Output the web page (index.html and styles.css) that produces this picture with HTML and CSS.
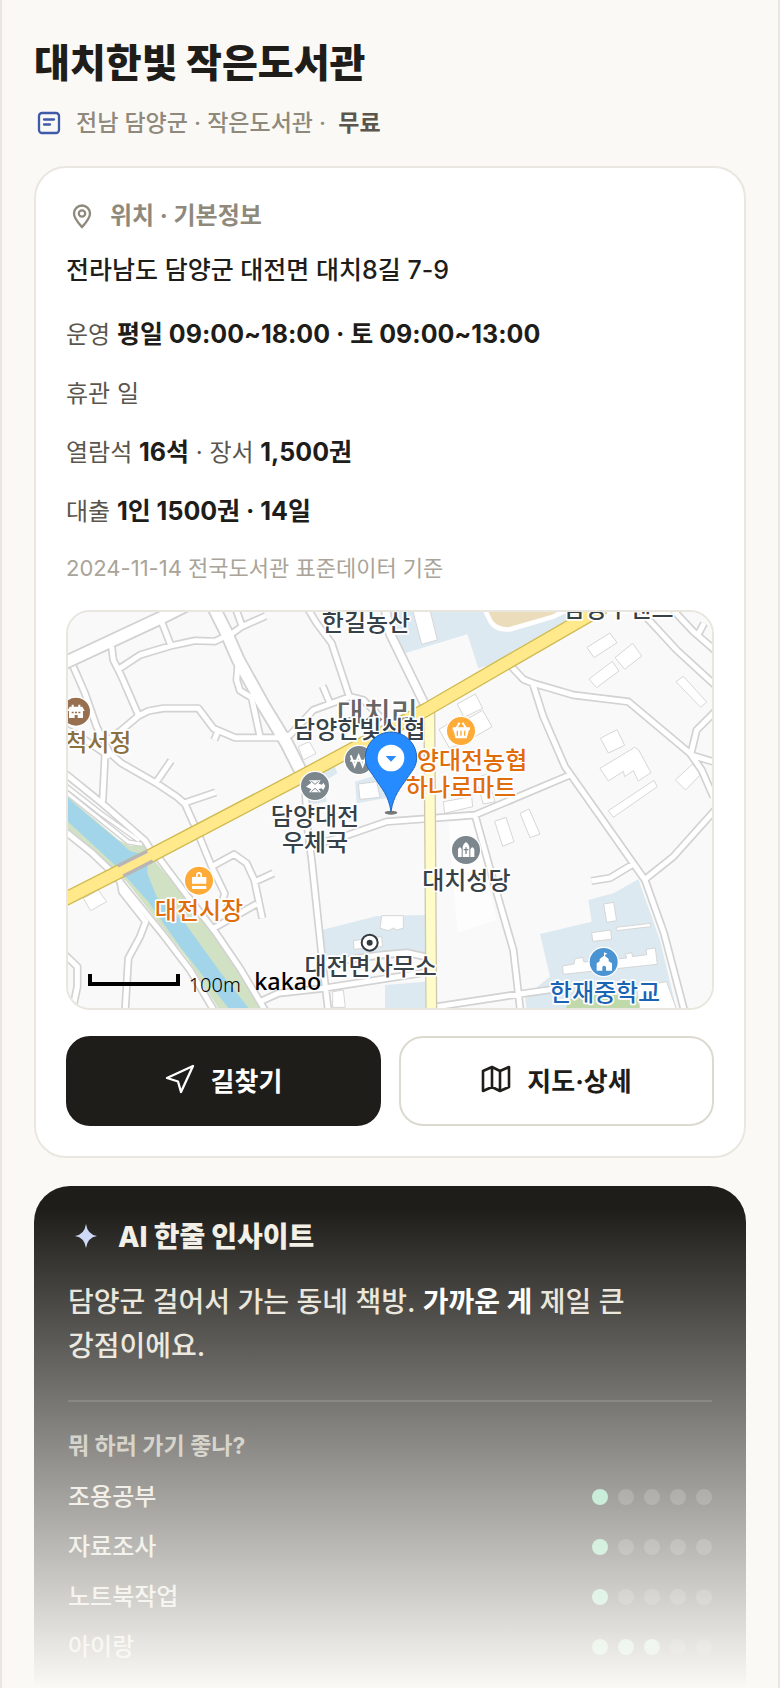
FILE: index.html
```
<!DOCTYPE html>
<html lang="ko">
<head>
    <meta charset="UTF-8">
    <meta name="viewport" content="width=device-width, initial-scale=1.0">
    <title>대치한빛 작은도서관</title>
    <link rel="stylesheet" href="styles.css">
</head>
<body>
    <main class="page">
        <header class="head">
            <h1>대치한빛 작은도서관</h1>
            <p class="sub">
                <svg class="icon" viewBox="0 0 30 30" fill="none" stroke="#3f5aa8" stroke-width="2.300" stroke-linecap="round"><rect x="5" y="5" width="20" height="20" rx="3"/><path d="M10 11.500h10M10 16.500h6"/></svg>
                <span>전남 담양군 · 작은도서관 ·&nbsp; <b>무료</b></span>
            </p>
        </header>

        <!-- 위치, 기본정보 -->
        <section class="card">
            <h2>
                <svg class="icon" viewBox="0 0 30 30" fill="none" stroke="#8f897c" stroke-width="2.300"><path d="M16 26C12 21.500 8 17.500 8 12.500a8 8 0 0 1 16 0C24 17.500 20 21.500 16 26z"/><circle cx="16" cy="12.500" r="3.200"/></svg>
                위치 · 기본정보
            </h2>
            <p class="addr">전라남도 담양군 대전면 대치8길 7-9</p>
            <ul class="info">
                <li>운영 <b>평일 09:00~18:00 · 토 09:00~13:00</b></li>
                <li>휴관 일</li>
                <li>열람석 <b>16석</b> · 장서 <b>1,500권</b></li>
                <li>대출 <b>1인 1500권 · 14일</b></li>
            </ul>
            <p class="note">2024-11-14 전국도서관 표준데이터 기준</p>

            <div class="map">
                <svg viewBox="24 36 1932 1188" preserveAspectRatio="xMidYMid slice">
                    <rect width="2000" height="1300" fill="#f9f9f9"/>
                    <!-- 학교, 관공서 부지 -->
                    <g fill="#dde9f1">
                        <path d="M985 30H1570L1350 180L1255 205L1222 103L1035 160L1000 100z"/>
                        <path d="M1440 1002L1595 965L1585 900L1660 880L1735 838L1800 1020L1850 1230H1400L1395 1190L1470 1130z"/>
                        <path d="M785 990L950 948L1095 945V1065L790 1100zM975 1155L1095 1145V1230H975z"/>
                        <path d="M885 545L1000 510V590L890 610zM770 520L825 500L832 520L790 545zM745 580L795 570L800 605L745 615z"/>
                    </g>
                    <path d="M1165 665L1240 655L1310 960L1193 998z" fill="#fdfdfd"/>
                    <path d="M1270 20L1292 65Q1310 92 1350 88L1480 50L1540 20z" fill="#ebdcbc" stroke="#fff" stroke-width="14"/>
                    <!-- 하천 -->
                    <path d="M24 590L175 719L212 738L262 733L290 790L375 890L465 1005L600 1215L605 1230H478L385 1080L200 845L160 808L100 748L24 688z" fill="#d0e2c3"/>
                    <path d="M24 593L75 638L175 722L210 753L235 760L262 752V820L290 890L375 970L480 1115L570 1230H510L360 1040L265 905L172 802L100 735L24 665z" fill="#a2d5ea"/>
                    <path d="M1515 1230L1530 1198Q1640 1170 1750 1195V1230z" fill="#c0d9ab"/>
                    <!-- 건물 -->
                    <g fill="#fff" stroke="#d6d6d6" stroke-width="3">
                        <path d="M1055 20L1105 10L1132 120L1085 133z"/>
                        <path d="M1581 142L1650 99L1671 128L1602 173zM1665 173L1718 130L1745 168L1694 208zM1587 237L1657 184L1677 213L1610 263zM1848 245L1870 229L1940 306L1922 322z"/>
                        <path d="M1192 312L1246 282L1268 325L1212 352zM1225 355L1268 331L1296 380L1245 410zM1137 388L1180 362L1212 430L1168 444z"/>
                        <path d="M1621 415L1671 389L1694 436L1645 459zM1620 505L1724 442L1736 450L1773 518L1735 543L1720 512L1694 530L1690 514L1645 543zM1645 632L1782 541L1792 560L1660 652zM1846 540L1898 492L1922 523L1877 570z"/>
                        <path d="M1150 605L1235 590L1238 620L1154 640zM1247 535L1280 522L1305 605L1270 612zM1380 640L1407 627L1440 702L1410 713zM1304 664L1338 652L1362 725L1328 739z"/>
                        <path d="M1595 998L1652 990L1655 1018L1598 1024zM1631 912L1661 907L1670 962L1640 967zM1668 982L1772 970V980L1670 992zM1507 1098L1542 1092L1545 1076L1568 1072L1572 1086L1700 1074L1696 1062L1715 1058L1718 1070L1760 1064L1758 1048L1786 1044L1792 1093L1510 1123z"/>
                        <path d="M965 947H1030V985L1010 990L1000 984L985 992L960 985zM880 1022L965 1010L968 1040L882 1048zM818 1175L850 1170L856 1222H818zM1730 1160L1820 1145L1850 1230H1740z"/>
                        <path d="M895 552L950 545L960 592L900 598zM70 895L115 870L140 905L92 932zM730 480L768 460L748 425L715 440z"/>
                    </g>
                    <!-- 골목길 : 테두리 먼저, 그 위에 흰 길 -->
                    <g fill="none" stroke="#d2d2d2" stroke-width="25" stroke-linejoin="round">
                        <path id="thin" stroke-width="17" d="M10 552L125 642L238 722M10 570L110 650L205 726L245 733"/>
                        <path id="lane" d="M40 200L75 280L110 380L150 460L185 490L290 550L350 590L375 612L410 690L455 800L494 880L484 915M155 140L160 180L185 230L235 345M175 208L240 165L330 138L405 122L465 124L505 105M303 60L332 135M130 430L185 390L235 348L265 333L310 325H415L460 385L525 413H655L690 405L760 330L870 290L910 300L960 350M535 180L530 240L540 272L575 293L600 410M510 105L545 80L617 48M525 20L545 75M740 20L770 70L815 130L868 290M788 258L808 305M463 420L475 390M333 482L290 545M370 610L467 577M135 465L128 605M0 508L130 613L255 722L285 770M0 380L60 410L150 470M0 682L95 758L160 820L210 882L310 1005L390 1110L467 1240M180 840L186 875L257 965L240 1010L205 1075L195 1240M290 765L380 885L465 995L540 1105L600 1205L620 1240M455 800L522 763L560 790L583 840L607 955M585 845L640 820M460 985L590 912M0 1050L52 1100V1160L35 1240M735 560L742 680L755 780L790 1110L806 1240M760 735L850 710L980 665L1245 645L1530 525M600 1205L655 1180L790 1165L1110 1115M790 1090L960 1065L1040 1058L1105 1072M1345 190L1390 238L1420 250L1540 285L1705 305L1890 460L1925 510L1960 590M1418 250L1450 350L1515 500L1755 840L1812 1000L1875 1240M1245 645L1305 860L1360 1050L1382 1240M1130 1220L1380 1182L1480 1168M1730 20L1850 150L1970 260M1830 20L1900 95L1970 155M1912 108L1932 70M1970 330L1910 390L1893 460M1893 465L1970 488M1755 838L1840 770L1970 625M1594 843L1650 834L1715 795"/>
                        <path stroke-width="32" d="M975 20L990 100L1095 315"/>
                        <path stroke-width="44" d="M0 195L300 55L380 15M460 20L500 100L535 180L610 315L680 430L728 525"/>
                    </g>
                    <g fill="none" stroke="#fff" stroke-width="15" stroke-linejoin="round">
                        <path stroke-width="9" d="M10 552L125 642L238 722M10 570L110 650L205 726L245 733"/>
                        <path d="M40 200L75 280L110 380L150 460L185 490L290 550L350 590L375 612L410 690L455 800L494 880L484 915M155 140L160 180L185 230L235 345M175 208L240 165L330 138L405 122L465 124L505 105M303 60L332 135M130 430L185 390L235 348L265 333L310 325H415L460 385L525 413H655L690 405L760 330L870 290L910 300L960 350M535 180L530 240L540 272L575 293L600 410M510 105L545 80L617 48M525 20L545 75M740 20L770 70L815 130L868 290M788 258L808 305M463 420L475 390M333 482L290 545M370 610L467 577M135 465L128 605M0 508L130 613L255 722L285 770M0 380L60 410L150 470M0 682L95 758L160 820L210 882L310 1005L390 1110L467 1240M180 840L186 875L257 965L240 1010L205 1075L195 1240M290 765L380 885L465 995L540 1105L600 1205L620 1240M455 800L522 763L560 790L583 840L607 955M585 845L640 820M460 985L590 912M0 1050L52 1100V1160L35 1240M735 560L742 680L755 780L790 1110L806 1240M760 735L850 710L980 665L1245 645L1530 525M600 1205L655 1180L790 1165L1110 1115M790 1090L960 1065L1040 1058L1105 1072M1345 190L1390 238L1420 250L1540 285L1705 305L1890 460L1925 510L1960 590M1418 250L1450 350L1515 500L1755 840L1812 1000L1875 1240M1245 645L1305 860L1360 1050L1382 1240M1130 1220L1380 1182L1480 1168M1730 20L1850 150L1970 260M1830 20L1900 95L1970 155M1912 108L1932 70M1970 330L1910 390L1893 460M1893 465L1970 488M1755 838L1840 770L1970 625M1594 843L1650 834L1715 795"/>
                        <path stroke-width="22" d="M975 20L990 100L1095 315"/>
                        <path stroke-width="33" d="M0 195L300 55L380 15M460 20L500 100L535 180L610 315L680 430L728 525"/>
                    </g>
                    <!-- 큰길 -->
                    <g fill="none">
                        <path d="M1108 325L1114 1240" stroke="#cfc8b0" stroke-width="36"/>
                        <path d="M1108 325L1114 1240" stroke="#fffcc9" stroke-width="28"/>
                        <path d="M0 905L270 768L730 527L1100 328L1350 183L1650 10" stroke="#d0bb53" stroke-width="43"/>
                        <path d="M0 905L270 768L730 527L1100 328L1350 183L1650 10" stroke="#ffe98b" stroke-width="35"/>
                        <path d="M173 798L262 754M190 828L278 783" stroke="#b9b5b5" stroke-width="10"/>
                    </g>
                    <!-- 장소 아이콘 -->
                    <g stroke="#fff" stroke-width="4">
                        <circle cx="48" cy="335" r="44" fill="#99704f"/>
                        <circle cx="417" cy="842" r="44" fill="#ffab38"/>
                        <circle cx="1203" cy="393" r="44" fill="#ffab38"/>
                        <circle cx="897" cy="480" r="44" fill="#7b878c"/>
                        <circle cx="765" cy="558" r="44" fill="#7b878c"/>
                        <circle cx="1218" cy="750" r="44" fill="#7b878c"/>
                        <circle cx="1631" cy="1086" r="44" fill="#4b94d3"/>
                    </g>
                    <g fill="#fff">
                        <path d="M22 333L29 320H35V314H41V320H55V314H61V320H67L74 333H69V354H53V345H44V354H27V333z"/>
                        <path d="M35 335h6v5h-6zM45 335h6v5h-6zM55 335h6v5h-6z" fill="#99704f"/>
                        <path d="M396 831H408V826Q408 816 417 816Q426 816 426 826V831H439V851H396zM413 831H421V826Q421 821 417 821Q413 821 413 826zM396 858H439V867H396z"/>
                        <path d="M1178 382L1187 382L1196 367L1201 370L1194 382H1213L1205 370L1210 367L1220 382H1230V390H1227L1220 415H1187L1180 390H1178z"/>
                        <path d="M1192 392v15M1203 392v15M1214 392v15" stroke="#ffab38" stroke-width="4"/>
                        <path d="M738 560L754 548L747 541H782L776 551L786 554L790 548L796 558L790 570L784 565L776 567L783 577H747L754 568z"/>
                        <path d="M754 544L765 553L776 544M754 575L765 565L776 575" fill="none" stroke="#7b878c" stroke-width="3"/>
                        <path d="M872 466L884 498L896 467L908 498L920 466M871 482H922" fill="none" stroke="#fff" stroke-width="6"/>
                        <path d="M1194 771V748Q1200 735 1205 748V771zM1231 771V748Q1237 735 1243 748V771zM1208 771V740Q1210 731 1218 726Q1226 731 1228 740V771z"/>
                        <path d="M1218 742v20M1211 749h14" stroke="#7b878c" stroke-width="4"/>
                        <path d="M1610 1090L1619 1084V1077L1632 1067V1057L1642 1061L1635 1065V1068L1646 1077V1084L1656 1090V1112H1638V1101Q1632 1094 1627 1101V1112H1610z"/>
                    </g>
                    <circle cx="929" cy="1028" r="24" fill="#fff" stroke="#333b40" stroke-width="6"/>
                    <circle cx="929" cy="1028" r="9" fill="#333b40"/>
                    <!-- 지명 -->
                    <g class="place">
                        <text class="town" x="952" y="372">대치리</text>
                        <text x="918" y="92">한길농산</text>
                        <text x="1675" y="52">담양우렌트</text>
                        <text x="898" y="415">담양한빛신협</text>
                        <text class="brown" x="115" y="452">척서정</text>
                        <text x="765" y="674">담양대전</text>
                        <text x="765" y="754">우체국</text>
                        <text x="1219" y="867">대치성당</text>
                        <text x="932" y="1124">대전면사무소</text>
                        <text class="orange" x="1203" y="508">담양대전농협</text>
                        <text class="orange" x="1203" y="587">하나로마트</text>
                        <text class="orange" x="417" y="958">대전시장</text>
                        <text class="blue" x="1635" y="1203">한재중학교</text>
                    </g>
                    <path d="M90 1122V1152H354V1122" fill="none" stroke="#000" stroke-width="12"/>
                    <text class="scale" x="386" y="1175">100m</text>
                    <text class="kakao" x="583" y="1170">kakao</text>
                    <!-- 마커 -->
                    <ellipse cx="993" cy="638" rx="19" ry="6" fill="#777"/>
                    <path d="M993 634C985 585 965 565 945 535C930 512 916 500 916 473a77 77 0 0 1 154 0C1070 500 1056 512 1041 535C1021 565 1001 585 993 634z" fill="#258bff" stroke="#1b66c4" stroke-width="3"/>
                    <circle cx="993" cy="474" r="40" fill="#fff"/>
                    <path d="M977 468H1009L993 485z" fill="#258bff"/>
                </svg>
            </div>

            <div class="btns">
                <button class="btn dark">
                    <svg class="icon" viewBox="0 0 30 30" fill="none" stroke="currentColor" stroke-width="2.300" stroke-linejoin="round"><path d="M28 2L2 14L13 17.500L16 28z"/></svg>
                    길찾기
                </button>
                <button class="btn">
                    <svg class="icon" viewBox="0 0 30 30" fill="none" stroke="currentColor" stroke-width="2.600" stroke-linejoin="round"><path d="M2 7L11 3L19 7L28 3V23L19 27L11 23L2 27zM11 3V23M19 7V27"/></svg>
                    지도·상세
                </button>
            </div>
        </section>

        <!-- AI 인사이트 -->
        <section class="ai">
            <h2>
                <svg class="icon" viewBox="0 0 30 30" fill="#ccd8f6"><path d="M18 2Q19.500 12.500 29 14Q19.500 15.500 18 26Q16.500 15.500 7 14Q16.500 12.500 18 2z"/></svg>
                AI 한줄 인사이트
            </h2>
            <p class="say">담양군 걸어서 가는 동네 책방. <b>가까운 게</b> 제일 큰 강점이에요.</p>
            <h3>뭐 하러 가기 좋나?</h3>
            <ul class="score">
                <li>조용공부 <span class="dots"><i class="on"></i><i></i><i></i><i></i><i></i></span></li>
                <li>자료조사 <span class="dots"><i class="on"></i><i></i><i></i><i></i><i></i></span></li>
                <li>노트북작업 <span class="dots"><i class="on"></i><i></i><i></i><i></i><i></i></span></li>
                <li>아이랑 <span class="dots"><i class="on"></i><i class="on"></i><i class="on"></i><i></i><i></i></span></li>
            </ul>
        </section>
        <div class="fade"></div>
    </main>
</body>
</html>
```
FILE: styles.css
```
* {box-sizing: border-box; margin: 0; padding: 0;}
body {background: #faf9f5; color: #1e1d19; font-family: Inter, "Noto Sans CJK KR", sans-serif; font-size: 25px; word-break: keep-all;}
ul {list-style: none;}
.icon {width: 30px; height: 30px; flex: none;}

.page {position: relative; display: flex; flex-direction: column; height: 100vh; overflow: hidden; padding: 34px 32px 0; border: 2px solid #e9e7df; border-width: 0 2px;}
.head h1 {font-size: 39px; line-height: 58px; font-weight: 800;}
.sub {display: flex; align-items: center; gap: 12px; margin-top: 12px; font-size: 23px; line-height: 38px; font-weight: 500; color: #8f897c;}
.sub b {color: #5a564d; font-weight: 600;}

/* 기본정보 카드 */
.card {margin-top: 24px; padding: 30px; background: #fff; border: 2px solid #e9e7df; border-radius: 32px;}
.card h2 {display: flex; align-items: center; gap: 14px; font-size: 24px; line-height: 36px; font-weight: 700; color: #8f897c;}
.addr {margin-top: 16px; line-height: 40px; font-weight: 500;}
.info {margin-top: 15px; color: #5a564d;}
.info li {line-height: 59px; font-size: 24px;}
.info b {color: #1e1d19; font-size: 25px; font-weight: 700;}
.note {margin-top: 9px; font-size: 22px; line-height: 36px; color: #aaa498;}

.map {height: 400px; margin-top: 24px; border: 2px solid #e9e5df; border-radius: 24px; overflow: hidden;}
.map svg {display: block; width: 100%; height: 100%;}
.place {font: 500 72px "Noto Sans CJK KR", sans-serif; text-anchor: middle; fill: #364148; stroke: #fff; stroke-width: 10px; stroke-linejoin: round; paint-order: stroke;}
.place .town {font-size: 88px; fill: #666;}
.place .brown {fill: #8c713f;}
.place .orange {fill: #e06c0a;}
.place .blue {fill: #1b64b4;}
.scale {font: 300 60px "Noto Sans", sans-serif;}
.kakao {font: 500 70px "Noto Sans", sans-serif;}

.btns {display: grid; grid-template-columns: 1fr 1fr; gap: 18px; margin-top: 26px;}
.btn {display: flex; align-items: center; justify-content: center; gap: 16px; height: 90px; padding-bottom: 4px; font: inherit; font-size: 26px; font-weight: 700; color: #1e1d19; background: #fff; border: 2px solid #dcdad0; border-radius: 24px;}
.btn.dark {color: #fff; background: #1e1d19; border-color: #1e1d19;}

/* AI 카드 */
.ai {flex: 1; margin-top: 28px; padding: 30px 34px 0; background: #1e1d19; color: #f2efe7; border-radius: 36px 36px 0 0;}
.ai h2 {display: flex; align-items: center; gap: 20px; font-size: 28px; line-height: 42px; font-weight: 800;}
.say {margin-top: 22px; padding-bottom: 32px; border-bottom: 2px solid #3d3c38; font-size: 28px; line-height: 44px; font-weight: 500; color: #e6e2d8;}
.say b {color: #fff; font-weight: 700;}
.ai h3 {margin-top: 26px; font-size: 23px; line-height: 36px; font-weight: 700; color: #b5b0a4;}
.score {margin-top: 8px;}
.score li {display: flex; align-items: center; justify-content: space-between; line-height: 50px; font-size: 24px; font-weight: 500; color: #e6e2d8;}
.dots {display: flex; gap: 10px;}
.dots i {width: 16px; height: 16px; border-radius: 50%; background: #454440;}
.dots .on {background: #7fdcae;}
.fade {position: absolute; left: -2px; right: -2px; bottom: 0; height: 480px; background: linear-gradient(rgba(250, 249, 245, 0), #faf9f5); pointer-events: none;}
```
